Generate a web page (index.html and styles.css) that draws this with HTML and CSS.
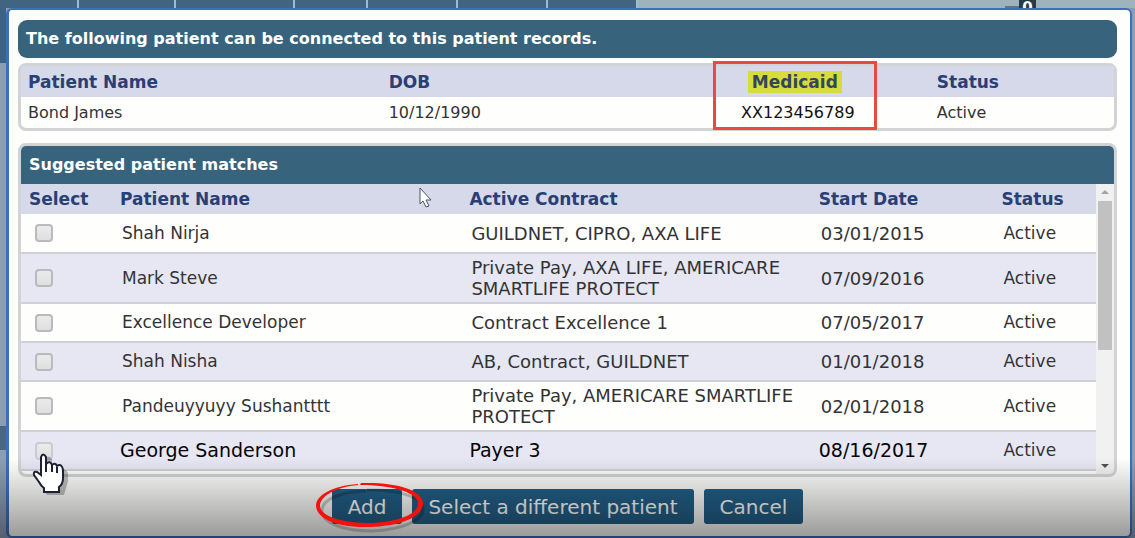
FILE: index.html
```
<!DOCTYPE html>
<html lang="en">
<head>
    <meta charset="UTF-8">
    <meta name="viewport" content="width=device-width, initial-scale=1.0">
    <title>Connect Patient</title>
    <link rel="stylesheet" href="styles.css">
</head>
<body>
    <div class="page" aria-hidden="true">
        <div class="page-nav">
            <div class="tab tab-first"></div>
            <div class="tab tab-second"></div>
            <div class="tab tab-wide"></div>
            <div class="tab tab-small"></div>
            <div class="tab"></div>
            <div class="tab"></div>
            <div class="tab"></div>
            <div class="dash"></div>
            <div class="counter">0</div>
        </div>
        <div class="page-side"></div>
        <div class="page-item"></div>
    </div>

    <div class="modal" role="dialog" aria-labelledby="modal-title">
        <h1 class="title-bar" id="modal-title">The following patient can be connected to this patient records.</h1>

        <div class="panel">
            <table class="patient">
                <colgroup>
                    <col class="p-name">
                    <col class="p-dob">
                    <col class="p-medicaid">
                    <col>
                </colgroup>
                <tr>
                    <th>Patient Name</th>
                    <th>DOB</th>
                    <th class="medicaid"><mark>Medicaid</mark><span class="red-box"></span></th>
                    <th class="p-status">Status</th>
                </tr>
                <tr>
                    <td>Bond James</td>
                    <td>10/12/1990</td>
                    <td class="medicaid">XX123456789</td>
                    <td class="p-status">Active</td>
                </tr>
            </table>
        </div>

        <div class="panel matches">
            <h2 class="panel-title">Suggested patient matches</h2>
            <div class="list">
                <table class="match-table">
                    <colgroup>
                        <col class="c-select">
                        <col class="c-name">
                        <col class="c-contract">
                        <col class="c-date">
                        <col>
                    </colgroup>
                    <thead>
                        <tr>
                            <th>Select</th>
                            <th>Patient Name</th>
                            <th>Active Contract</th>
                            <th>Start Date</th>
                            <th>Status</th>
                        </tr>
                    </thead>
                    <tbody>
                        <tr>
                            <td><input type="checkbox" id="m1"></td>
                            <td><label for="m1">Shah Nirja</label></td>
                            <td class="large">GUILDNET, CIPRO, AXA LIFE</td>
                            <td class="large">03/01/2015</td>
                            <td>Active</td>
                        </tr>
                        <tr class="tall">
                            <td><input type="checkbox" id="m2"></td>
                            <td><label for="m2">Mark Steve</label></td>
                            <td class="large">Private Pay, AXA LIFE, AMERICARE<br>SMARTLIFE PROTECT</td>
                            <td class="large">07/09/2016</td>
                            <td>Active</td>
                        </tr>
                        <tr>
                            <td><input type="checkbox" id="m3"></td>
                            <td><label for="m3">Excellence Developer</label></td>
                            <td class="large">Contract Excellence 1</td>
                            <td class="large">07/05/2017</td>
                            <td>Active</td>
                        </tr>
                        <tr>
                            <td><input type="checkbox" id="m4"></td>
                            <td><label for="m4">Shah Nisha</label></td>
                            <td class="large">AB, Contract, GUILDNET</td>
                            <td class="large">01/01/2018</td>
                            <td>Active</td>
                        </tr>
                        <tr class="tall">
                            <td><input type="checkbox" id="m5"></td>
                            <td><label for="m5">Pandeuyyuyy Sushantttt</label></td>
                            <td class="large">Private Pay, AMERICARE SMARTLIFE<br>PROTECT</td>
                            <td class="large">02/01/2018</td>
                            <td>Active</td>
                        </tr>
                        <tr class="current">
                            <td><input type="checkbox" id="m6"></td>
                            <td class="strong"><label for="m6">George Sanderson</label></td>
                            <td class="strong">Payer 3</td>
                            <td class="strong">08/16/2017</td>
                            <td>Active</td>
                        </tr>
                    </tbody>
                </table>
                <div class="scrollbar">
                    <span class="arrow-up"></span>
                    <span class="thumb"></span>
                    <span class="arrow-down"></span>
                </div>
            </div>
        </div>

        <div class="buttons">
            <div class="circled">
                <button type="button">Add</button>
                <svg class="circle" width="116" height="60" viewBox="0 0 116 60">
                    <path class="circle-shadow" d="M50 10C24 11 7 18 6 29C5 41 25 50 56 50C85 49 107 40 107 28C106 16 82 8 51 9"/>
                    <path class="circle-ink" d="M42 3C16 5 0 14 0 25C1 39 24 47 54 46C85 45 107 36 107 22C106 9 81 1 45 2L44 4C75 4 101 11 102 22C103 33 82 41 55 42C27 42 5 36 4 25C4 15 20 6 42 4Z"/>
                </svg>
            </div>
            <button type="button">Select a different patient</button>
            <button type="button">Cancel</button>
        </div>
    </div>

    <div class="shade"></div>

    <svg class="arrow" width="15" height="22" viewBox="0 0 15 22">
        <path d="M2 1V17L5 14L8 20L11 19L8 13H13Z"/>
    </svg>
    <svg class="hand" width="42" height="52" viewBox="0 0 42 52">
        <path class="hand-shadow" d="M13 8V27L8 25Q4 24 5 29L15 44H32L36 30V22Q33 17 28 18Q25 15 20 16V8Q16 3 13 8Z"/>
        <path class="hand-shape" d="M9 24V6Q11 1 14 6V13Q18 9 20 14Q23 11 25 15Q30 12 31 19V27Q31 33 27 36V41H12V37Q9 35 7 31L2 24Q1 20 5 21Z"/>
        <path class="hand-lines" d="M14 12V21M20 14V21M25 16V22"/>
    </svg>
</body>
</html>
```
FILE: styles.css
```
* {
    box-sizing: border-box;
}
body {
    font-family: "DejaVu Sans", Verdana, sans-serif;
    font-size: 17px;
    color: #333;
    min-height: 100vh;
    margin: 0;
    padding: 8px 3px 0 6px;
    display: flex;
    position: relative;
    overflow: hidden;
}

/* page behind the dialog */
.page {
    position: absolute;
    inset: 0;
    z-index: -1;
    background-color: #8c9db8;
    display: flex;
    flex-direction: column;
}
.page-nav {
    display: flex;
    height: 8px;
    background-color: #9fb3bd;
}
.tab {
    width: 90px;
    background-color: #416580;
    border-right: 2px solid #9bbdd0;
}
.tab-first {
    width: 79px;
}
.tab-second {
    width: 97px;
}
.tab-wide {
    width: 119px;
}
.tab-small {
    width: 73px;
}
.dash {
    width: 14px;
    height: 2px;
    margin: 6px 0 0 auto;
    background-color: #5f7682;
}
.counter {
    width: 17px;
    height: 8px;
    margin-right: 99px;
    background-color: #263b46;
    color: #fff;
    font-size: 15px;
    font-weight: bold;
    line-height: 16px;
    text-align: center;
}
.page-side {
    width: 6px;
    height: 55px;
    background-color: #3c6384;
}
.page-item {
    width: 6px;
    height: 24px;
    margin: auto 0 88px;
    background-color: #4a6686;
}

/* dialog */
.modal {
    flex: 1;
    padding: 10px 13px 12px 9px;
    border: 2px solid #3a70bd;
    border-left-width: 3px;
    border-radius: 6px;
    background-color: #fefefd;
}
.title-bar {
    margin: 0 0 5px;
    padding: 0 8px;
    border-radius: 9px;
    background-color: #37637c;
    color: #fff;
    font-size: 16px;
    line-height: 38px;
}
.panel {
    border: 3px solid #d1d3d5;
    border-radius: 8px;
}
.matches {
    margin-top: 12px;
    overflow: hidden;
}
.panel-title {
    margin: 0;
    padding: 0 8px;
    background-color: #37637c;
    color: #fff;
    font-size: 16px;
    line-height: 38px;
}
table {
    width: 100%;
    table-layout: fixed;
    border-collapse: collapse;
}
th {
    padding: 0 7px;
    background-color: #d6d9e9;
    color: #293f76;
    text-align: left;
}
td {
    padding: 0 7px;
}
.patient th,
.patient td {
    height: 31px;
}
.patient td {
    font-size: 16px;
}
.p-name {
    width: 33%;
}
.p-dob {
    width: 30.3%;
}
.p-medicaid {
    width: 15%;
}
.patient .p-status {
    padding-left: 60px;
}
.patient .medicaid {
    position: relative;
    text-align: center;
    padding: 0;
}
.patient td.medicaid {
    padding-left: 6px;
    color: #111;
}
mark {
    padding: 1px 4px;
    background-color: #d5dc3c;
    color: #34475a;
}
.red-box {
    position: absolute;
    inset: -5px 0 -33px;
    border: 3px solid #e9493f;
}

/* matches list */
.list {
    display: flex;
    align-items: stretch;
}
.match-table {
    flex: 1;
    margin-bottom: 3px;
}
.match-table th {
    height: 30px;
    padding: 0 8px;
}
.match-table td {
    height: 39px;
    padding: 0 10px;
    border-bottom: 2px solid #d0d1d7;
    line-height: 21px;
}
.match-table .tall td {
    height: 50px;
}
.match-table tbody tr:nth-child(even) {
    background-color: #e6e7f3;
}
.match-table .large {
    font-size: 18px;
}
.match-table .strong {
    padding: 0 8px;
    color: #050505;
    font-size: 19px;
}
.c-select {
    width: 91px;
}
.c-name,
.c-contract {
    width: 32.5%;
}
.c-date {
    width: 17%;
}
input[type="checkbox"] {
    appearance: none;
    display: block;
    width: 18px;
    height: 18px;
    margin: 0 4px;
    border: 2px solid #b9babd;
    border-radius: 4px;
    background: linear-gradient(#ebebeb, #dedfde);
}
.current input[type="checkbox"] {
    border-color: #c9cad2;
}
.scrollbar {
    width: 18px;
    padding: 6px 2px 2px;
    background-color: #f1f1f1;
    display: flex;
    flex-direction: column;
    align-items: center;
}
.arrow-up {
    border: 4px solid transparent;
    border-top-width: 0;
    border-bottom-color: #a3a3a3;
}
.thumb {
    width: 14px;
    height: 53%;
    margin-top: 7px;
    background-color: #c1c1c1;
}
.arrow-down {
    margin-top: auto;
    margin-bottom: 4px;
    border: 4px solid transparent;
    border-bottom-width: 0;
    border-top-color: #505050;
}

/* buttons */
.buttons {
    display: flex;
    justify-content: center;
    gap: 10px;
    margin-top: 12px;
}
button {
    height: 35px;
    padding: 0 16px;
    border: none;
    border-radius: 3px;
    background-color: #225f87;
    color: #fff;
    font-family: inherit;
    font-size: 20px;
    cursor: pointer;
}
.circled {
    position: relative;
}
.circle {
    position: absolute;
    z-index: 2;
    left: -16px;
    top: -8px;
}
.circle-ink {
    fill: #f5120d;
}
.circle-shadow {
    fill: none;
    stroke: #000;
    stroke-width: 3;
    opacity: 0.2;
}

/* darkening at the bottom of the screen */
.shade {
    position: absolute;
    left: 0;
    right: 0;
    bottom: 0;
    height: 80px;
    background: linear-gradient(rgba(0, 0, 0, 0), rgba(0, 0, 0, 0.4));
    pointer-events: none;
}

/* mouse pointers */
.arrow {
    position: absolute;
    left: 418px;
    top: 187px;
    fill: #fff;
    stroke: #4c5364;
}
.hand {
    position: absolute;
    left: 32px;
    top: 451px;
}
.hand-shape {
    fill: #fff;
    stroke: #1b2035;
    stroke-width: 2;
}
.hand-lines {
    fill: none;
    stroke: #1b2035;
    stroke-width: 2;
}
.hand-shadow {
    fill: #000;
    opacity: 0.25;
}
```
